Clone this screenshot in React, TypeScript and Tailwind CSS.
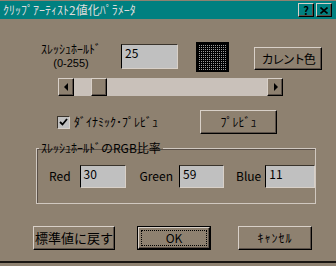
import React from 'react';

const raised =
  'flex items-center justify-center border-t border-l border-b border-r border-t-[#d8d0c8] border-l-[#d8d0c8] border-b-black border-r-black shadow-[inset_-1px_-1px_0_#5a5048]';
const sunken =
  'border-t border-l border-b border-r border-t-[#3a342c] border-l-black border-b-[#d8d0c8] border-r-[#d8d0c8] bg-[#c0c0c0] px-[3px] pt-px leading-[14px] text-[12px]';

const DotSquare: React.FC = () => (
  <svg width="33" height="30" viewBox="0 0 33 30">
    <defs>
      <pattern id="dots" width="2" height="2" patternUnits="userSpaceOnUse">
        <rect width="2" height="2" fill="#000" />
        <rect x="1" y="1" width="1" height="1" fill="#9a9a9a" />
      </pattern>
    </defs>
    <rect width="33" height="30" fill="#000" />
    <rect x="2" y="2" width="29" height="26" fill="url(#dots)" />
  </svg>
);

const Arrow: React.FC<{ dir: 'left' | 'right' }> = ({ dir }) => (
  <svg width="5" height="8" viewBox="0 0 5 8">
    {dir === 'left' ? <path d="M4 0 L0 4 L4 8 Z" fill="#000" /> : <path d="M1 0 L5 4 L1 8 Z" fill="#000" />}
  </svg>
);

export default function App() {
  return (
    <div className="w-[336px] h-[266px] bg-[#8e8170] flex flex-col overflow-hidden text-black text-[12px] font-['Noto_Sans_CJK_JP',sans-serif]">
      {/* title bar */}
      <div className="mt-px h-[18px] bg-[#008080] flex items-center pl-[3px] pr-[4px]">
        <span className="text-[#dcdcdc] leading-none">ｸﾘｯﾌﾟｱｰﾃｨｽﾄ2値化ﾊﾟﾗﾒｰﾀ</span>
        <div className="ml-auto flex gap-[2px]">
          <div className={`${raised} w-[16px] h-[14px] text-[11px] font-bold leading-none`}>?</div>
          <div className={`${raised} w-[16px] h-[14px]`}>
            <svg width="8" height="7" viewBox="0 0 8 7">
              <path d="M0.5 0.5 L7.5 6.5 M7.5 0.5 L0.5 6.5" stroke="#000" strokeWidth="1.6" />
            </svg>
          </div>
        </div>
      </div>

      {/* threshold row */}
      <div className="mt-[21px] flex items-start h-[32px]">
        <div className="ml-[38px] w-[66px] flex flex-col items-center">
          <span className="leading-[17px]">ｽﾚｯｼｭﾎｰﾙﾄﾞ</span>
          <span className="leading-[13px] text-[11px] font-['Liberation_Sans',sans-serif]">(0-255)</span>
        </div>
        <div className={`${sunken} ml-[17px] mt-[4px] w-[57px] h-[25px]`}>25</div>
        <div className="ml-[18px] mt-[2px]">
          <DotSquare />
        </div>
        <div className={`${raised} ml-[25px] mt-[7px] w-[68px] h-[23px] tracking-[-1.5px]`}>カレント色</div>
      </div>

      {/* scrollbar */}
      <div className="mt-[6px] ml-[58px] w-[225px] h-[18px] flex bg-[#c9c1ba]">
        <div className={`${raised} w-[16px] h-full bg-[#8e8170]`}>
          <Arrow dir="left" />
        </div>
        <div className="w-[17px]" />
        <div className={`${raised} w-[16px] h-full bg-[#8e8170]`} />
        <div className="flex-1" />
        <div className={`${raised} w-[16px] h-full bg-[#8e8170]`}>
          <Arrow dir="right" />
        </div>
      </div>

      {/* preview row */}
      <div className="mt-[14px] flex items-center h-[24px]">
        <div className="ml-[57px] w-[13px] h-[13px] border-t border-l border-b border-r border-t-[#3a342c] border-l-[#3a342c] border-b-[#d8d0c8] border-r-[#d8d0c8] bg-[#c0c0c0] flex items-center justify-center">
          <svg width="9" height="8" viewBox="0 0 9 8">
            <path d="M1 4 L3.5 6.5 L8 1" stroke="#000" strokeWidth="1.8" fill="none" />
          </svg>
        </div>
        <span className="ml-[4px] w-[126px] leading-none">ﾀﾞｲﾅﾐｯｸ･ﾌﾟﾚﾋﾞｭ</span>
        <div className={`${raised} w-[77px] h-[24px]`}>ﾌﾟﾚﾋﾞｭ</div>
      </div>

      {/* RGB group */}
      <fieldset className="mt-[8px] ml-[36px] w-[273px] h-[62px] border border-[#d0c8c0] shadow-[inset_1px_1px_0_#5a5048] flex">
        <legend className="ml-[2px] px-[2px] leading-[12px]">ｽﾚｯｼｭﾎｰﾙﾄﾞのRGB比率</legend>
        <div className="mt-[11px] flex items-start h-[23px]">
          <span className="ml-[12px] mt-[5px] leading-[12px]">Red</span>
          <div className={`${sunken} ml-[9px] w-[46px] h-[23px]`}>30</div>
          <span className="ml-[14px] mt-[5px] leading-[12px]">Green</span>
          <div className={`${sunken} ml-[6px] w-[45px] h-[23px]`}>59</div>
          <span className="ml-[12px] mt-[5px] leading-[12px]">Blue</span>
          <div className={`${sunken} ml-[4px] w-[50px] h-[23px]`}>11</div>
        </div>
      </fieldset>

      {/* bottom buttons */}
      <div className="mt-[22px] flex items-start h-[25px]">
        <div className={`${raised} ml-[33px] w-[82px] h-[24px] text-[13px]`}>標準値に戻す</div>
        <div className="ml-[22px] w-[74px] h-[24px] border border-black flex">
          <div className={`${raised} flex-1`}>
            <div className="w-[66px] h-[16px] border border-dotted border-black flex items-center justify-center leading-none">
              OK
            </div>
          </div>
        </div>
        <div className={`${raised} ml-[27px] w-[74px] h-[24px] tracking-[1px]`}>ｷｬﾝｾﾙ</div>
      </div>

      <div className="mt-auto mb-[3px] h-[2px] bg-[#1a1612]" />
    </div>
  );
}
